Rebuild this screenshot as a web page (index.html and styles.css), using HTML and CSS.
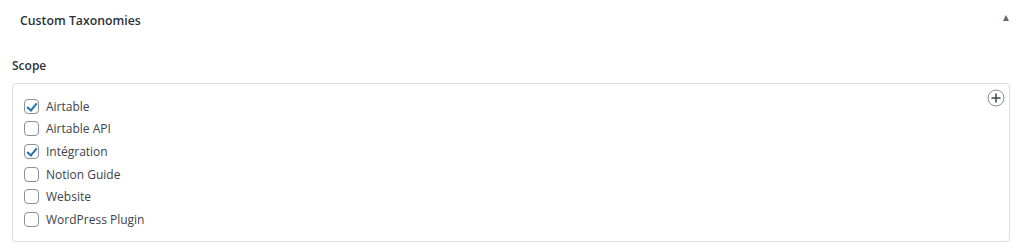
FILE: index.html
```html
<!DOCTYPE html>
<html lang="fr">
<head>
<meta charset="utf-8">
<title>Custom Taxonomies</title>
<link rel="stylesheet" href="styles.css">
</head>
<body>
<div class="panel">
  <div class="panel-header">
    <h2 class="panel-title">Custom Taxonomies</h2>
    <span class="toggle" aria-hidden="true"></span>
  </div>
  <div class="panel-body">
    <div class="field-label">Scope</div>
    <div class="term-box">
      <ul class="term-list">
        <li><label><span class="cb checked"></span>Airtable</label></li>
        <li><label><span class="cb"></span>Airtable API</label></li>
        <li><label><span class="cb checked"></span>Intégration</label></li>
        <li><label><span class="cb"></span>Notion Guide</label></li>
        <li><label><span class="cb"></span>Website</label></li>
        <li><label><span class="cb"></span>WordPress Plugin</label></li>
      </ul>
      <button class="add-btn" type="button" aria-label="Add">
        <svg width="18" height="18" viewBox="0 0 18 18"><circle cx="9" cy="9" r="8" fill="none" stroke="#8c8f94" stroke-width="1"/><path d="M9 4.5v9M4.5 9h9" stroke="#3c434a" stroke-width="1.5"/></svg>
      </button>
    </div>
  </div>
</div>
</body>
</html>
```
FILE: styles.css
```css
html, body {
  margin: 0;
  padding: 0;
  background: #fff;
}
body {
  font-family: "Open Sans", "Noto Sans", sans-serif;
  color: #3c434a;
}
.panel-header {
  display: flex;
  align-items: center;
  justify-content: space-between;
  height: 40px;
  padding: 0 15px 0 20px;
}
.panel-title {
  margin: 0;
  font-size: 12.3px;
  font-weight: 600;
  color: #2c3338;
}
.toggle {
  width: 0;
  height: 0;
  border-left: 3.5px solid transparent;
  border-right: 3.5px solid transparent;
  border-bottom: 6px solid #646970;
  margin-top: -4px;
}
.panel-body {
  padding: 17px 14px 8px 12px;
}
.field-label {
  font-size: 12px;
  font-weight: 600;
  color: #2c3338;
  line-height: 18px;
  margin-bottom: 8px;
}
.term-box {
  position: relative;
  border: 1px solid #dcdcde;
  border-radius: 4px;
  padding: 11px 11px 10px;
  min-height: 130px;
}
.term-list {
  list-style: none;
  margin: 0;
  padding: 0;
}
.term-list li {
  height: 22.6px;
  display: flex;
  align-items: center;
}
.term-list label {
  display: flex;
  align-items: center;
  font-size: 12px;
  color: #3c434a;
}
.cb {
  box-sizing: border-box;
  width: 15px;
  height: 15px;
  border: 1px solid #8c8f94;
  border-radius: 4px;
  margin-right: 7px;
  position: relative;
  background: #fff;
}
.cb.checked::after {
  content: "";
  position: absolute;
  left: 4px;
  top: 1px;
  width: 4px;
  height: 8px;
  border-right: 2px solid #2271b1;
  border-bottom: 2px solid #2271b1;
  transform: rotate(40deg);
}
.add-btn {
  position: absolute;
  top: 5px;
  right: 4px;
  width: 18px;
  height: 18px;
  padding: 0;
  border: 0;
  background: transparent;
  display: flex;
}
```
